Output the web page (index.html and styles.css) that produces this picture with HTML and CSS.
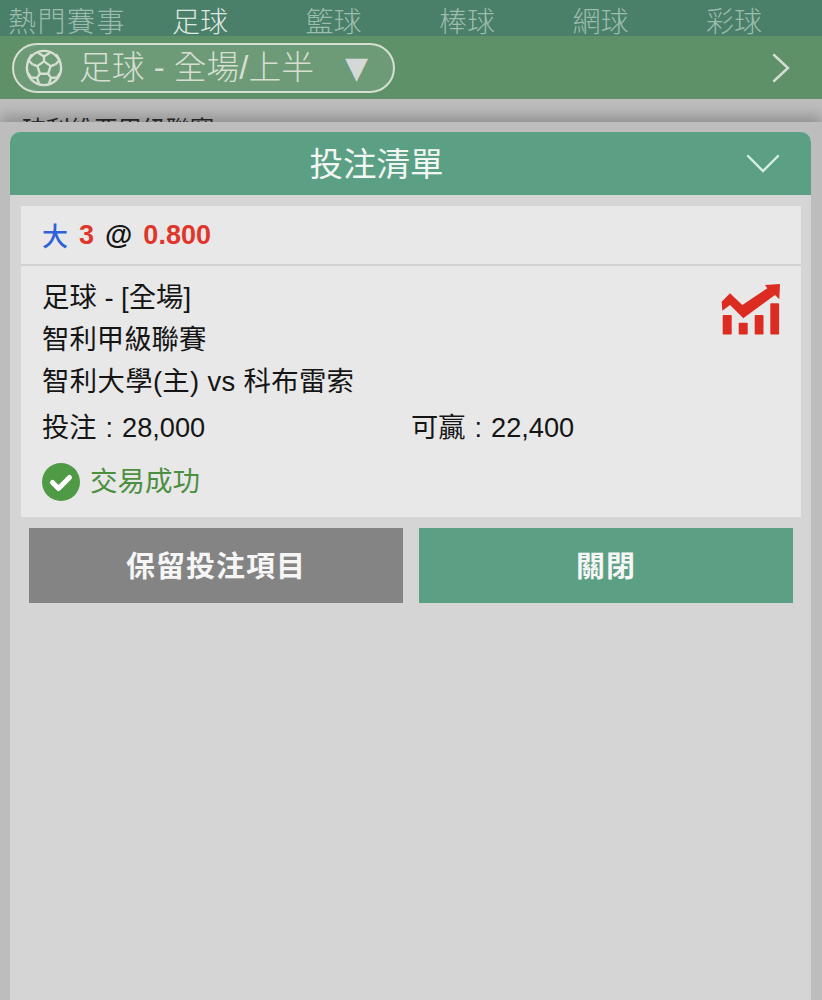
FILE: index.html
```html
<!DOCTYPE html>
<html lang="zh-Hant">
<head>
<meta charset="utf-8">
<title>投注清單</title>
<link rel="stylesheet" href="styles.css">
</head>
<body>
<div class="page">
  <nav class="tabs">
    <span class="tab tab-first">熱門賽事</span>
    <span class="tab tab-active">足球</span>
    <span class="tab">籃球</span>
    <span class="tab">棒球</span>
    <span class="tab">網球</span>
    <span class="tab">彩球</span>
  </nav>
  <div class="subbar">
    <div class="pill">
      <svg class="ball" viewBox="0 0 40 40" fill="none" stroke="#d6dfd2" stroke-width="2.500" stroke-linejoin="round">
        <circle cx="20" cy="20" r="18"/>
        <path d="M20 13l7 5-2.700 8h-8.600l-2.700-8z"/>
        <path d="M20 13V8M27 18l5-1.700M24.300 26l3 4.400M15.700 26l-3 4.400M13 18l-5-1.700"/>
        <path d="M13 3.500L20 8l7-4.500M32 16.300l4.500-4.500-3.500-6.300M27.300 30.400l6.500-.4 3.500-5.500M12.700 30.400l-6.500-.4-3.500-5.500M8 16.300L3.500 11.800 7 5.500M12.700 30.400l2 6M27.300 30.400l-2 6"/>
      </svg>
      <span class="pill-text">足球 - 全場/上半</span>
      <span class="pill-arrow">▼</span>
    </div>
    <svg class="chev-right" viewBox="0 0 18 30" fill="none" stroke="#d6dfd2" stroke-width="2.400" stroke-linecap="round"><path d="M2 2l14 13L2 28"/></svg>
  </div>
  <div class="behind"><span class="behind-text">玻利維亞甲級聯賽</span></div>

  <div class="sheet">
    <section class="panel">
      <header class="panel-head">
        <h1 class="panel-title">投注清單</h1>
        <svg class="chev-down" viewBox="0 0 34 20" fill="none" stroke="#d8efe2" stroke-width="2.400" stroke-linecap="round"><path d="M2 2l15 15L32 2"/></svg>
      </header>
      <div class="panel-body">
        <article class="card">
          <div class="bet-line">
            <span class="blue">大</span>
            <span class="red">3</span>
            <span class="at">@</span>
            <span class="red">0.800</span>
          </div>
          <div class="card-main">
            <svg class="chart" viewBox="0 0 60 52" fill="#dc2c22">
              <path d="M.7 17.700L9 9.300 21.300 21 46.300 4.300 44 1 59 0l-.7 15.300L54 11 22.300 34.300 9 21 1.300 26.700z"/>
              <rect x="1.700" y="31" width="9" height="19.500" rx=".8"/>
              <rect x="17.700" y="38.700" width="9" height="11.800" rx=".8"/>
              <rect x="33.700" y="31" width="8.800" height="19.500" rx=".8"/>
              <rect x="49.300" y="19.300" width="8.800" height="31.200" rx=".8"/>
            </svg>
            <p class="line">足球 - [全場]</p>
            <p class="line">智利甲級聯賽</p>
            <p class="line line-teams">智利大學(主) vs 科布雷索</p>
            <div class="amounts">
              <span class="amount">投注 : 28,000</span>
              <span class="amount">可贏 : 22,400</span>
            </div>
            <div class="status">
              <svg class="check" viewBox="0 0 38 38"><circle cx="19" cy="19" r="19" fill="#4f9a45"/><path d="M10.500 19.500l6 6 11-11" fill="none" stroke="#fff" stroke-width="5" stroke-linecap="round" stroke-linejoin="round"/></svg>
              <span class="status-text">交易成功</span>
            </div>
          </div>
        </article>
        <div class="actions">
          <button class="btn btn-grey">保留投注項目</button>
          <button class="btn btn-green">關閉</button>
        </div>
      </div>
    </section>
  </div>
</div>
</body>
</html>
```
FILE: styles.css
```css
* { box-sizing: border-box; }
html, body { margin: 0; padding: 0; }
body {
  width: 822px;
  height: 1000px;
  overflow: hidden;
  font-family: "Liberation Sans", "Noto Sans CJK TC", sans-serif;
  color: #151515;
}
.page { position: relative; width: 822px; height: 1000px; background: #bdbdbd; overflow: hidden; }

.tabs {
  height: 36px;
  background: #4a7f69;
  display: flex;
  align-items: flex-start;
  padding-left: 8px;
  color: #9dbcae;
  font-size: 28px;
  font-weight: 300;
  font-family: "Noto Sans CJK TC", sans-serif;
  line-height: 36px;
}
.tab { width: 133.500px; padding: 2px 0 0 31px; white-space: nowrap; flex: none; }
.tab-first { width: 133px; padding-left: 0; letter-spacing: 1.500px; }
.tab-active { color: #dfe8e0; }

.subbar {
  height: 63px;
  background: #5f9168;
  display: flex;
  align-items: center;
  justify-content: space-between;
  padding: 0 32px 0 12px;
}
.pill {
  width: 383px;
  height: 50px;
  border: 2px solid #d6dfd2;
  border-radius: 25px;
  background: #6d9b78;
  display: flex;
  align-items: center;
  padding-left: 11px;
  color: #d6dfd2;
}
.ball { width: 38px; height: 38px; flex: none; }
.pill-text {
  margin-left: 16px;
  font-size: 32.800px;
  font-weight: 300;
  line-height: 50px;
  white-space: nowrap;
}
.pill-arrow {
  margin-left: 31px;
  font-family: "DejaVu Sans", sans-serif;
  font-size: 30px;
  line-height: 50px;
  color: #d4d8d6;
}
.chev-right { width: 18px; height: 30px; }

.behind {
  height: 60px;
  padding: 12px 0 0 22px;
  background: #bdbdbd;
  font-family: "Noto Sans CJK TC", sans-serif;
  font-size: 24px;
  color: #2c2c2c;
  line-height: 34px;
}

.sheet {
  position: absolute;
  left: 0;
  top: 122px;
  width: 822px;
  height: 878px;
  background: #bdbdbd;
  padding: 10px 11px 0 10px;
  box-shadow: 0 -7px 12px rgba(0, 0, 0, .22);
}
.panel { height: 100%; background: #d5d5d5; border-radius: 10px 10px 0 0; overflow: hidden; }
.panel-head {
  height: 63px;
  background: #5ba084;
  display: flex;
  align-items: center;
  justify-content: center;
  position: relative;
  padding: 0 68px 4px 0;
}
.panel-title {
  margin: 0;
  font-family: "Noto Sans CJK TC", sans-serif;
  font-size: 33.500px;
  font-weight: 400;
  line-height: 59px;
  color: #f2f7f3;
}
.chev-down { position: absolute; right: 31px; top: 22px; width: 34px; height: 20px; }

.panel-body { padding: 11px 10px 0 11px; }
.card { height: 311px; background: #e8e8e8; }
.bet-line {
  height: 60px;
  border-bottom: 2px solid #d0d0d0;
  padding-left: 21px;
  display: flex;
  align-items: center;
  gap: 11px;
  font-size: 27px;
  font-weight: 700;
  line-height: 56px;
}
.blue { color: #2e62d9; font-family: "Noto Sans CJK TC", sans-serif; font-weight: 500; font-size: 26px; }
.red { color: #e0352b; }
.at { color: #151515; font-size: 28px; }
.card-main { position: relative; padding: 11px 21px 0 21px; }
.chart { position: absolute; right: 20px; top: 18px; width: 60px; height: 52px; }
.line {
  margin: 0;
  height: 42px;
  font-size: 27.400px;
  line-height: 42px;
  white-space: nowrap;
}
.line-teams { letter-spacing: .33px; }
.amounts { display: flex; height: 48px; align-items: center; margin-top: 1px; }
.amount {
  width: 369px;
  font-size: 27.200px;
  line-height: 48px;
  white-space: nowrap;
  word-spacing: 1.500px;
}
.status { display: flex; align-items: center; gap: 10px; margin-top: 3px; height: 54px; }
.check { width: 38px; height: 38px; flex: none; }
.status-text { font-size: 27.500px; color: #4c8f3f; line-height: 38px; }

.actions { display: flex; gap: 16px; padding: 11px 8px 0; }
.btn {
  flex: 1;
  height: 75px;
  border: 0;
  padding: 0 0 4px;
  margin: 0;
  color: #f6f6f6;
  font-family: "Noto Sans CJK TC", sans-serif;
  font-size: 29px;
  font-weight: 700;
  letter-spacing: 1px;
}
.btn-grey { background: #848484; }
.btn-green { background: #5ba084; }
```
